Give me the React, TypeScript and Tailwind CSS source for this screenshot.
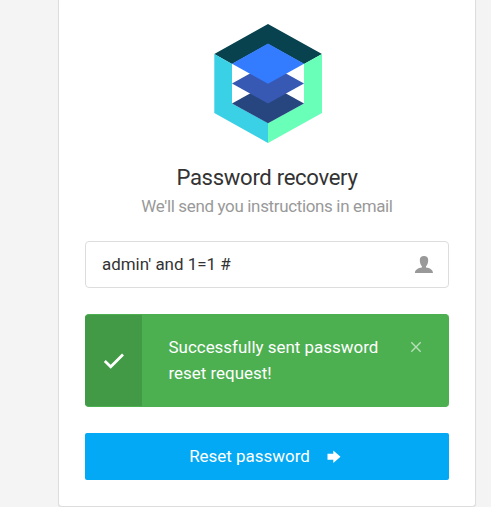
function Logo() {
  return (
    <svg width="110" height="120" viewBox="0 0 110 120" className="block">
      <polygon points="1.3,31 55,1 109,31 91,41 55,21 19,41" fill="#07424e" />
      <polygon points="1.3,31 19,41 19,80.5 55,100 55,120 1.3,90" fill="#3ad0e6" />
      <polygon points="109,31 91,41 91,80.5 55,100 55,120 109,90" fill="#69ffb9" />
      <polygon points="55,60.5 91,80.5 55,100.3 19,80.5" fill="#27467f" />
      <polygon points="55,40.5 91,60.5 55,80.5 19,60.5" fill="#3759b4" />
      <polygon points="55,20.5 91,40.7 55,60.7 19,40.7" fill="#337bff" />
    </svg>
  );
}

function UserIcon() {
  return (
    <svg width="20" height="18" viewBox="0 0 20 18" className="block" fill="#999999">
      <path d="M10 0C12.6 0 14.2 1.3 14.2 4.2C14.2 6.8 13.3 9 12 10.2V11.6C15.8 12 18.9 13.9 19 17H0.9C1 13.9 4.2 12 7.9 11.6V10.2C6.7 9 5.8 6.8 5.8 4.2C5.8 1.3 7.4 0 10 0Z" />
    </svg>
  );
}

export default function App() {
  return (
    <div className="flex h-[507px] w-[491px] items-start overflow-hidden bg-[#f4f4f4] pl-[58px] font-['Roboto',sans-serif] text-[16.95px] text-[#333333]">
      <main className="flex h-[507px] w-[418px] flex-col rounded-b-[4px] border border-t-0 border-[#dddddd] bg-white px-[26px] pt-[23px] shadow-[0_1px_1px_rgba(0,0,0,0.05)]">
        <div className="ml-[128px]">
          <Logo />
        </div>
        <h1 className="mt-[19px] text-center text-[22.1px] leading-[31px] tracking-[-0.31px]">Password recovery</h1>
        <p className="text-center leading-[26px] tracking-[-0.33px] text-[#999999]">We'll send you instructions in email</p>

        <div className="mt-[22px] flex h-[47px] items-center justify-between rounded-[4px] border border-[#dddddd] pr-[14px] pl-4">
          <span>admin' and 1=1 #</span>
          <UserIcon />
        </div>

        <div className="mt-[26px] flex h-[93px] shrink-0 overflow-hidden rounded-[4px] border-y border-[#4caf50] bg-[#4caf50] text-white">
          <div className="flex w-[57px] items-center justify-center bg-[#439a46]">
            <svg width="22" height="18" viewBox="0 0 22 18" fill="none" stroke="white" strokeWidth="2.7">
              <path d="M1.8 9L7.7 14.8L20 2.5" />
            </svg>
          </div>
          <p className="ml-[26.5px] w-[235px] pt-[19px] leading-[26px]">Successfully sent password reset request!</p>
          <svg width="12" height="12" viewBox="0 0 12 12" className="mt-[26px] ml-[6px]" stroke="white" strokeOpacity="0.6" strokeWidth="1.4">
            <path d="M1.3 1.3L10.7 10.7M10.7 1.3L1.3 10.7" />
          </svg>
        </div>

        <button className="mt-[26px] flex h-[47px] items-center justify-center rounded-[2px] bg-[#03a9f4] text-white">
          <span>Reset password</span>
          <svg width="14" height="14" viewBox="0 0 14 14" fill="white" className="mr-[4px] ml-[17px]">
            <path d="M0.5 3.8H6.3V0.5L13.5 6.8L6.3 13V9.8H0.5Z" />
          </svg>
        </button>
      </main>
    </div>
  );
}
